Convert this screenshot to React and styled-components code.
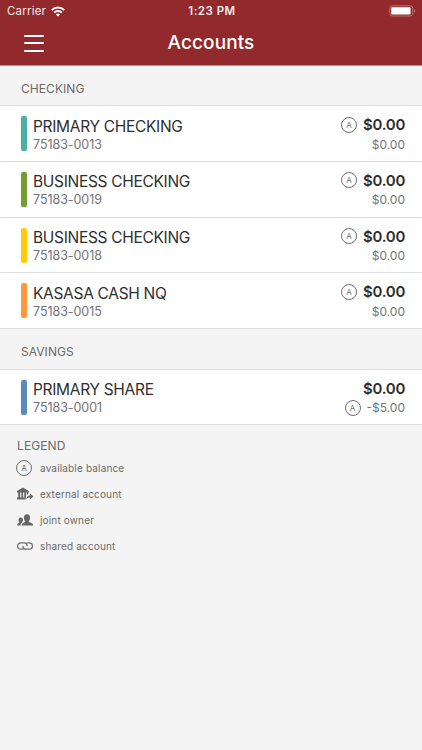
import styled, { createGlobalStyle } from 'styled-components';

const GlobalStyle = createGlobalStyle`
  * {
    box-sizing: border-box;
  }
  body {
    margin: 0;
    background: #f4f4f4;
    color: #2f2f2f;
    font-family: Inter, 'Liberation Sans', sans-serif;
  }
`;

const Screen = styled.div`
  height: 750px;
  background: #f4f4f4;
  overflow: hidden;
`;

const Header = styled.header`
  height: 66px;
  background: #91292d;
  border-bottom: 1px solid #c48d90;
  color: #fff;
`;

const StatusBar = styled.div`
  height: 22px;
  padding: 0 6px 0 7px;
  display: grid;
  grid-template-columns: 1fr auto 1fr;
  align-items: center;
  font-size: 11.5px;
  line-height: 22px;
  color: #f8e9e9;
`;

const Carrier = styled.div`
  display: flex;
  align-items: center;
  gap: 5px;
  letter-spacing: 0.2px;
`;

const Clock = styled.div`
  padding-left: 1px;
  font-weight: 600;
  letter-spacing: 0.5px;
`;

const BatteryIcon = styled.svg`
  justify-self: end;
`;

const NavBar = styled.div`
  height: 42px;
  padding: 0 24px;
  display: grid;
  grid-template-columns: 1fr auto 1fr;
  align-items: center;
`;

const MenuButton = styled.button`
  width: 20px;
  height: 17px;
  padding: 0;
  border: 0;
  background: none;
  display: flex;
  flex-direction: column;
  justify-content: space-between;
`;

const MenuLine = styled.span`
  width: 20px;
  height: 2px;
  border-radius: 1px;
  background: #fff;
`;

const Title = styled.h1`
  margin: 0;
  font-size: 19px;
  line-height: 40px;
  font-weight: 500;
  letter-spacing: 0.1px;
`;

const SectionTitle = styled.h2`
  margin: 0;
  height: ${props => props.$height};
  padding: 15px 21px 0;
  font-size: 12px;
  line-height: 16px;
  font-weight: 400;
  letter-spacing: 0.06px;
  color: #6b6b6b;
`;

const List = styled.ul`
  margin: 0;
  padding: 0;
  list-style: none;
  border-top: 1px solid #dedede;
`;

const Row = styled.li`
  height: 55.67px;
  padding: 10px 17px 0 21px;
  display: flex;
  background: #fff;
  border-bottom: 1px solid #dedede;
`;

const ColorBar = styled.span`
  width: 6px;
  height: 35px;
  margin-right: 6px;
  border-radius: 2px;
  background: ${props => props.$color};
`;

const Details = styled.div`
  flex: 1;
  padding-top: 0.5px;
`;

const Name = styled.div`
  font-size: 15.5px;
  line-height: 20px;
  letter-spacing: -0.31px;
`;

const Number = styled.div`
  font-size: 12.5px;
  line-height: 16px;
  letter-spacing: -0.05px;
  color: #747474;
`;

const Balances = styled.div`
  display: flex;
  flex-direction: column;
  align-items: flex-end;
`;

const Balance = styled.div`
  display: flex;
  align-items: center;
  gap: 6px;
  font-size: 15px;
  line-height: 17px;
  font-weight: 600;
  letter-spacing: -0.3px;
`;

const SubBalance = styled(Balance)`
  margin-top: 3.5px;
  font-size: 12px;
  line-height: 16px;
  height: 16px;
  font-weight: 400;
  letter-spacing: 0;
  color: #747474;
`;

const Badge = styled.span`
  width: 16px;
  height: 16px;
  border: 1px solid #707070;
  border-radius: 50%;
  display: flex;
  align-items: center;
  justify-content: center;
  font-size: 8px;
  line-height: 14px;
  font-weight: 400;
  letter-spacing: 0;
  color: #707070;
`;

const Legend = styled.section`
  padding: 13px 16px;
  color: #6b6b6b;
`;

const LegendTitle = styled.h2`
  margin: 0 0 1px 1px;
  font-size: 12px;
  line-height: 16px;
  font-weight: 400;
  letter-spacing: 0.1px;
`;

const LegendItem = styled.div`
  height: 26px;
  display: flex;
  align-items: center;
  font-size: 10px;
  letter-spacing: 0.16px;
`;

const LegendMark = styled.span`
  width: 24px;
  display: flex;
`;

const LegendIcon = styled.svg`
  width: 18px;
  height: 16px;
  fill: #666;
`;

const checking = [
  { name: 'PRIMARY CHECKING', number: '75183-0013', color: '#48b0a4' },
  { name: 'BUSINESS CHECKING', number: '75183-0019', color: '#719e2f' },
  { name: 'BUSINESS CHECKING', number: '75183-0018', color: '#ffcb05' },
  { name: 'KASASA CASH NQ', number: '75183-0015', color: '#ff983b' },
];

function Account({ name, number, color, sub = '$0.00', availableBelow }) {
  return (
    <Row>
      <ColorBar $color={color} />
      <Details>
        <Name>{name}</Name>
        <Number>{number}</Number>
      </Details>
      <Balances>
        <Balance>
          {!availableBelow && <Badge>A</Badge>}
          $0.00
        </Balance>
        <SubBalance>
          {availableBelow && <Badge>A</Badge>}
          {sub}
        </SubBalance>
      </Balances>
    </Row>
  );
}

function WifiIcon() {
  return (
    <svg width='14' height='11' viewBox='0 0 14 11' fill='none' stroke='#fff' strokeWidth='2'>
      <path d='M.8 4.1a8.8 8.8 0 0 1 12.4 0M3.2 6.6a5.4 5.4 0 0 1 7.6 0' />
      <path d='M7 10.6 4.9 8.5a3 3 0 0 1 4.2 0z' fill='#fff' stroke='none' />
    </svg>
  );
}

function App() {
  return (
    <Screen>
      <GlobalStyle />
      <Header>
        <StatusBar>
          <Carrier>
            Carrier
            <WifiIcon />
          </Carrier>
          <Clock>1:23 PM</Clock>
          <BatteryIcon width='27' height='12' viewBox='0 0 27 12'>
            <rect x='.8' y='.8' width='23' height='10.2' rx='2.6' fill='none' stroke='#b97579' />
            <rect x='2.3' y='2.3' width='19.3' height='7.2' rx='.8' fill='#fff' />
            <path d='M25 4.2c1.7.6 1.7 2.8 0 3.4z' fill='#b97579' />
          </BatteryIcon>
        </StatusBar>
        <NavBar>
          <MenuButton aria-label='Menu'>
            <MenuLine />
            <MenuLine />
            <MenuLine />
          </MenuButton>
          <Title>Accounts</Title>
        </NavBar>
      </Header>

      <SectionTitle $height='39.2px'>CHECKING</SectionTitle>
      <List>
        {checking.map(account => (
          <Account key={account.number} {...account} />
        ))}
      </List>
      <SectionTitle $height='40px'>SAVINGS</SectionTitle>
      <List>
        <Account
          name='PRIMARY SHARE'
          number='75183-0001'
          color='#5a8bc0'
          sub='-$5.00'
          availableBelow
        />
      </List>

      <Legend>
        <LegendTitle>LEGEND</LegendTitle>
        <LegendItem>
          <LegendMark>
            <Badge>A</Badge>
          </LegendMark>
          available balance
        </LegendItem>
        <LegendItem>
          <LegendMark>
            <LegendIcon viewBox='0 0 18 16'>
              <path d='M1 6.4V5L6.9 1.5 12.8 5v1.4zM2.2 6.4h2v5.4h-2zM5.4 6.4h1.7v5.4H5.4zM8.3 6.4H10v5.4H8.3zM1 11.6h8.6v2H1zM10.8 6.4h1.5v1.5l-1.5 1z' />
              <path d='M10.4 13.6c0-2.8 1.4-4.2 3.6-4.2V7.6l3.4 2.9-3.4 2.9v-1.8c-1.7 0-2.7.4-3.6 2z' />
            </LegendIcon>
          </LegendMark>
          external account
        </LegendItem>
        <LegendItem>
          <LegendMark>
            <LegendIcon viewBox='0 0 18 16'>
              <path d='M5.8 13.5v-1c0-1.5 3.3-1.7 3.3-2.9 0-.8-1.2-1.4-1.2-3.8 0-2.3 1.1-3.6 3.1-3.6s3.1 1.3 3.1 3.6c0 2.4-1.2 3-1.2 3.8 0 1.2 4.1 1.4 4.1 3.1v.8z' />
              <path d='M1.2 13.5v-1c0-1.2 2.1-1.3 2.1-2.2 0-.5-.7-.9-.7-2.2 0-1.7.9-2.7 2.2-2.7s2.2 1 2.2 2.7c0 1.3-.7 1.7-.7 2.2-.9.7-1.6 1-1.6 2.2v1z' />
            </LegendIcon>
          </LegendMark>
          joint owner
        </LegendItem>
        <LegendItem>
          <LegendMark>
            <LegendIcon viewBox='0 0 18 16'>
              <g fill='none' stroke='#707070' strokeWidth='1.3' strokeLinecap='round'>
                <path d='M6.9 8.4c.2 1.6 1.5 2.8 3.1 2.8h3.2a3.2 3.2 0 0 0 0-6.4H11' />
                <path d='M11.1 7.6A3.1 3.1 0 0 0 8 4.8H4.8a3.2 3.2 0 0 0 0 6.4H7' />
              </g>
            </LegendIcon>
          </LegendMark>
          shared account
        </LegendItem>
      </Legend>
    </Screen>
  );
}

export default App;
